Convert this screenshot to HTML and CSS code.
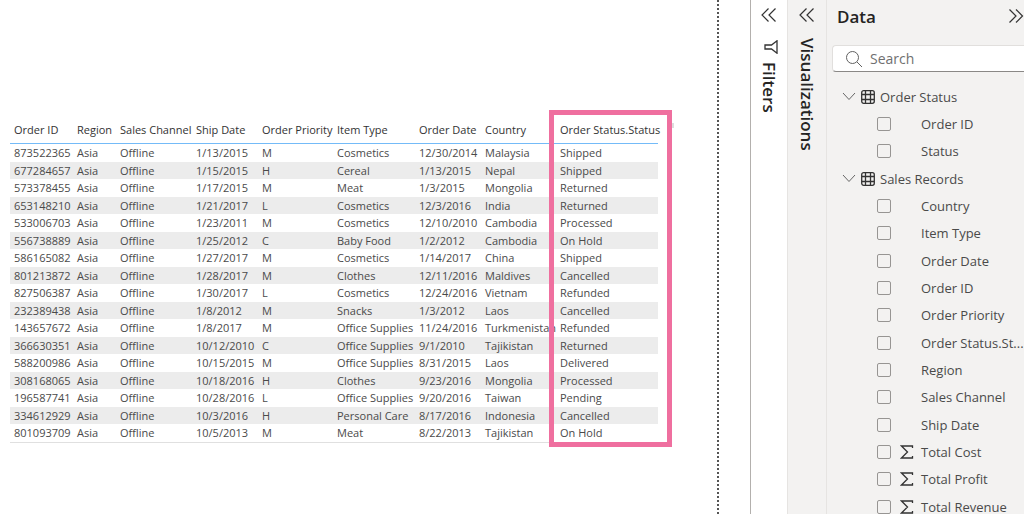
FILE: index.html
```html
<!DOCTYPE html>
<html lang="en">
<head>
    <meta charset="UTF-8">
    <meta name="viewport" content="width=device-width, initial-scale=1.0">
    <title>Sales Records</title>
    <link rel="stylesheet" href="styles.css">
</head>
<body>
    <main class="canvas">
        <div class="page">
            <div class="visual">
                <table class="records">
                    <colgroup>
                        <col class="w-id"><col class="w-region"><col class="w-channel"><col class="w-date"><col class="w-priority">
                        <col class="w-item"><col class="w-date"><col class="w-country"><col class="w-status">
                    </colgroup>
                    <thead>
                        <tr><th>Order ID</th><th>Region</th><th>Sales Channel</th><th>Ship Date</th><th>Order Priority</th><th>Item Type</th><th>Order Date</th><th>Country</th><th>Order Status.Status</th></tr>
                    </thead>
                    <tbody>
                        <tr><td>873522365</td><td>Asia</td><td>Offline</td><td>1/13/2015</td><td>M</td><td>Cosmetics</td><td>12/30/2014</td><td>Malaysia</td><td>Shipped</td></tr>
                        <tr><td>677284657</td><td>Asia</td><td>Offline</td><td>1/15/2015</td><td>H</td><td>Cereal</td><td>1/13/2015</td><td>Nepal</td><td>Shipped</td></tr>
                        <tr><td>573378455</td><td>Asia</td><td>Offline</td><td>1/17/2015</td><td>M</td><td>Meat</td><td>1/3/2015</td><td>Mongolia</td><td>Returned</td></tr>
                        <tr><td>653148210</td><td>Asia</td><td>Offline</td><td>1/21/2017</td><td>L</td><td>Cosmetics</td><td>12/3/2016</td><td>India</td><td>Returned</td></tr>
                        <tr><td>533006703</td><td>Asia</td><td>Offline</td><td>1/23/2011</td><td>M</td><td>Cosmetics</td><td>12/10/2010</td><td>Cambodia</td><td>Processed</td></tr>
                        <tr><td>556738889</td><td>Asia</td><td>Offline</td><td>1/25/2012</td><td>C</td><td>Baby Food</td><td>1/2/2012</td><td>Cambodia</td><td>On Hold</td></tr>
                        <tr><td>586165082</td><td>Asia</td><td>Offline</td><td>1/27/2017</td><td>M</td><td>Cosmetics</td><td>1/14/2017</td><td>China</td><td>Shipped</td></tr>
                        <tr><td>801213872</td><td>Asia</td><td>Offline</td><td>1/28/2017</td><td>M</td><td>Clothes</td><td>12/11/2016</td><td>Maldives</td><td>Cancelled</td></tr>
                        <tr><td>827506387</td><td>Asia</td><td>Offline</td><td>1/30/2017</td><td>L</td><td>Cosmetics</td><td>12/24/2016</td><td>Vietnam</td><td>Refunded</td></tr>
                        <tr><td>232389438</td><td>Asia</td><td>Offline</td><td>1/8/2012</td><td>M</td><td>Snacks</td><td>1/3/2012</td><td>Laos</td><td>Cancelled</td></tr>
                        <tr><td>143657672</td><td>Asia</td><td>Offline</td><td>1/8/2017</td><td>M</td><td>Office Supplies</td><td>11/24/2016</td><td>Turkmenistan</td><td>Refunded</td></tr>
                        <tr><td>366630351</td><td>Asia</td><td>Offline</td><td>10/12/2010</td><td>C</td><td>Office Supplies</td><td>9/1/2010</td><td>Tajikistan</td><td>Returned</td></tr>
                        <tr><td>588200986</td><td>Asia</td><td>Offline</td><td>10/15/2015</td><td>M</td><td>Office Supplies</td><td>8/31/2015</td><td>Laos</td><td>Delivered</td></tr>
                        <tr><td>308168065</td><td>Asia</td><td>Offline</td><td>10/18/2016</td><td>H</td><td>Clothes</td><td>9/23/2016</td><td>Mongolia</td><td>Processed</td></tr>
                        <tr><td>196587741</td><td>Asia</td><td>Offline</td><td>10/28/2016</td><td>L</td><td>Office Supplies</td><td>9/20/2016</td><td>Taiwan</td><td>Pending</td></tr>
                        <tr><td>334612929</td><td>Asia</td><td>Offline</td><td>10/3/2016</td><td>H</td><td>Personal Care</td><td>8/17/2016</td><td>Indonesia</td><td>Cancelled</td></tr>
                        <tr><td>801093709</td><td>Asia</td><td>Offline</td><td>10/5/2013</td><td>M</td><td>Meat</td><td>8/22/2013</td><td>Tajikistan</td><td>On Hold</td></tr>
                    </tbody>
                </table>
                <div class="highlight"></div>
            </div>
        </div>
    </main>

    <aside class="pane filters">
        <button class="icon-btn" aria-label="Expand filters">
            <svg width="16" height="16" viewBox="0 0 16 16"><path d="M7.500 1.500 1 8l6.500 6.500M14.500 1.500 8 8l6.500 6.500"/></svg>
        </button>
        <svg class="funnel" width="14" height="14" viewBox="0 0 14 14"><path d="M13 .8v12.400L7.500 9H1V5h6.500z"/></svg>
        <h2 class="side-title">Filters</h2>
    </aside>

    <aside class="pane visualizations">
        <button class="icon-btn" aria-label="Expand visualizations">
            <svg width="16" height="16" viewBox="0 0 16 16"><path d="M7.500 1.500 1 8l6.500 6.500M14.500 1.500 8 8l6.500 6.500"/></svg>
        </button>
        <h2 class="side-title">Visualizations</h2>
    </aside>

    <aside class="data">
        <header class="data-header">
            <h2>Data</h2>
            <button class="icon-btn" aria-label="Collapse data">
                <svg width="16" height="16" viewBox="0 0 16 16"><path d="M1.500 1.500 8 8l-6.500 6.500M8 1.500 14.500 8 8 14.500"/></svg>
            </button>
        </header>
        <label class="search">
            <svg width="18" height="18" viewBox="0 0 18 18"><circle cx="7.500" cy="7.500" r="6"/><path d="m12 12 5 5"/></svg>
            <input type="text" placeholder="Search" aria-label="Search">
        </label>
        <ul class="tree">
            <li class="group">
                <svg class="chevron" width="14" height="9" viewBox="0 0 14 9"><path d="m1 1 6 6.500L13 1"/></svg>
                <svg class="grid" width="14" height="14" viewBox="0 0 14 14"><rect x="0.700" y="0.700" width="12.600" height="12.600" rx="2"/><path d="M1 4.500h12M1 9.500h12M4.500 1v12M9.500 1v12"/></svg>
                <span>Order Status</span>
            </li>
            <li><label><input type="checkbox"><i></i>Order ID</label></li>
            <li><label><input type="checkbox"><i></i>Status</label></li>
            <li class="group">
                <svg class="chevron" width="14" height="9" viewBox="0 0 14 9"><path d="m1 1 6 6.500L13 1"/></svg>
                <svg class="grid" width="14" height="14" viewBox="0 0 14 14"><rect x="0.700" y="0.700" width="12.600" height="12.600" rx="2"/><path d="M1 4.500h12M1 9.500h12M4.500 1v12M9.500 1v12"/></svg>
                <span>Sales Records</span>
            </li>
            <li><label><input type="checkbox"><i></i>Country</label></li>
            <li><label><input type="checkbox"><i></i>Item Type</label></li>
            <li><label><input type="checkbox"><i></i>Order Date</label></li>
            <li><label><input type="checkbox"><i></i>Order ID</label></li>
            <li><label><input type="checkbox"><i></i>Order Priority</label></li>
            <li><label><input type="checkbox"><i></i>Order Status.St...</label></li>
            <li><label><input type="checkbox"><i></i>Region</label></li>
            <li><label><input type="checkbox"><i></i>Sales Channel</label></li>
            <li><label><input type="checkbox"><i></i>Ship Date</label></li>
            <li><label><input type="checkbox"><i><svg width="14" height="14" viewBox="0 0 14 14"><path d="M12.500 3V1H1.500l6 6-6 6h11v-2"/></svg></i>Total Cost</label></li>
            <li><label><input type="checkbox"><i><svg width="14" height="14" viewBox="0 0 14 14"><path d="M12.500 3V1H1.500l6 6-6 6h11v-2"/></svg></i>Total Profit</label></li>
            <li><label><input type="checkbox"><i><svg width="14" height="14" viewBox="0 0 14 14"><path d="M12.500 3V1H1.500l6 6-6 6h11v-2"/></svg></i>Total Revenue</label></li>
        </ul>
    </aside>
</body>
</html>
```
FILE: styles.css
```css
* {
    box-sizing: border-box;
}
body {
    display: flex;
    height: 100vh;
    margin: 0;
    overflow: hidden;
    background: #fff;
    color: #4a4a4a;
    font-family: "Open Sans", "Noto Sans", sans-serif;
}
h2 {
    margin: 0;
    color: #252423;
    font-size: 17px;
    font-weight: 600;
}
svg {
    display: block;
    flex: none;
    fill: none;
    stroke: #444;
}

/* Report canvas */
.canvas {
    flex: 1;
    min-width: 0;
    padding-right: 31px;
}
.page {
    height: 100%;
    padding: 116px 0 0 10px;
    border-right: 2px dotted #555;
}
.visual {
    position: relative;
    width: 648px;
}
.records {
    width: 100%;
    table-layout: fixed;
    border-collapse: separate;
    border-spacing: 0;
    border-bottom: 1px solid #e0e0e0;
    font-size: 11px;
    line-height: 16px;
}
.w-id { width: 63px; }
.w-region { width: 43px; }
.w-channel { width: 76px; }
.w-date { width: 66px; }
.w-priority { width: 75px; }
.w-item { width: 82px; }
.w-country { width: 75px; }
.w-status { width: 102px; }
.records th,
.records td {
    padding: 0 4px;
    text-align: left;
    font-weight: 400;
    white-space: nowrap;
}
.records th {
    height: 28px;
    border-bottom: 1px solid #74bbf8;
    color: #333;
}
.records td {
    height: 18px;
}
.records tr:nth-child(even) td {
    height: 17px;
    background: #ececec;
}
.highlight {
    position: absolute;
    top: -6px;
    right: -14px;
    bottom: -4px;
    width: 123px;
    border: 5px solid #ef6f9f;
}
.highlight::after {
    content: "";
    position: absolute;
    top: 8px;
    right: -7px;
    width: 2px;
    height: 5px;
    background: #ddd;
}

/* Collapsed panes */
.pane {
    display: flex;
    flex-direction: column;
    align-items: center;
    flex: none;
    padding-top: 7px;
}
.icon-btn {
    padding: 0;
    border: 0;
    background: none;
    cursor: pointer;
}
.icon-btn svg {
    stroke: #333;
    stroke-width: 1.2;
}
.filters {
    width: 37px;
    border-left: 1px solid #b3b0ad;
}
.funnel {
    margin: 17px 0 8px 3px;
    stroke: #333;
    stroke-width: 1.3;
}
.visualizations {
    width: 39px;
    background: #f3f2f1;
    border-left: 1px solid #e6e4e2;
}
.side-title {
    writing-mode: vertical-rl;
    line-height: 20px;
}
.visualizations .side-title {
    margin-top: 15px;
}

/* Data pane */
.data {
    flex: none;
    width: 198px;
    background: #f3f2f1;
    border-left: 1px solid #e6e4e2;
    overflow: hidden;
}
.data-header {
    display: flex;
    align-items: center;
    justify-content: space-between;
    height: 32px;
    padding-left: 10px;
}
.search {
    display: flex;
    align-items: center;
    gap: 7px;
    height: 27px;
    margin: 13px 0 11px 5px;
    padding-left: 12px;
    background: #fff;
    border: 1px solid #e1dfdd;
    border-right: 0;
    border-bottom-color: #8a8886;
    border-radius: 4px 0 0 4px;
}
.search svg {
    stroke: #616161;
}
.search input {
    min-width: 0;
    flex: 1;
    padding: 0;
    border: 0;
    outline: 0;
    background: none;
    font: 14px "Open Sans", "Noto Sans", sans-serif;
}
.search input::placeholder {
    color: #707070;
}
.tree {
    margin: 0;
    padding: 0;
    list-style: none;
    font-size: 13px;
    white-space: nowrap;
}
.tree li {
    display: flex;
    align-items: center;
    height: 27px;
}
.tree li:nth-child(3n) {
    height: 28px;
}
.group {
    gap: 5px;
    padding-left: 15px;
}
.chevron {
    stroke: #666;
}
.grid {
    stroke: #333;
    stroke-width: 1.3;
}
.tree label {
    display: flex;
    align-items: center;
    padding-left: 50px;
}
.tree input {
    appearance: none;
    flex: none;
    width: 14px;
    height: 14px;
    margin: 0 9px 0 0;
    border: 1px solid #979593;
    border-radius: 2px;
}
.tree i {
    width: 21px;
}
.tree i svg {
    stroke: #333;
    stroke-width: 1.3;
}
```
